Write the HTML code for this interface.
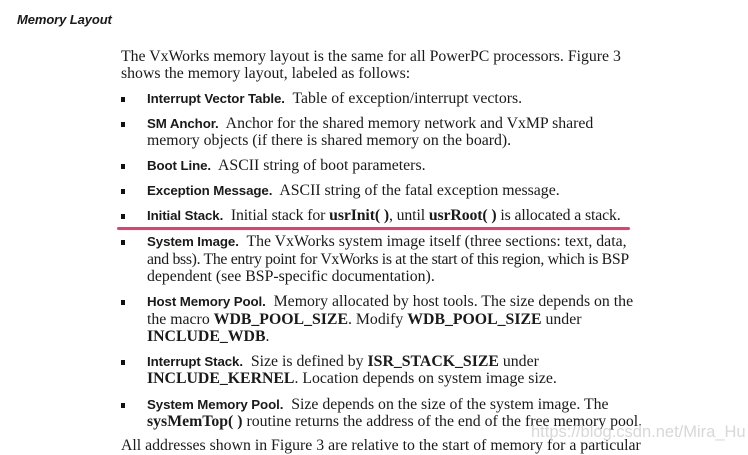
<!DOCTYPE html>
<html><head><meta charset="utf-8"><style>
body{margin:0;width:748px;height:452px;background:#fff;position:relative;overflow:hidden;color:#1a1a1a}
.l{position:absolute;white-space:nowrap;font-family:"Liberation Serif",serif;font-size:15.8px;line-height:18px}
.s{font-family:"Liberation Sans",sans-serif;font-weight:bold;font-size:13.3px;letter-spacing:-0.1px}
.b{position:absolute;left:121px;width:4px;height:5px;background:#111}
b{font-weight:bold}
</style></head><body>
<div class="l s" style="left:17px;top:11px;font-style:italic;font-size:13px">Memory Layout</div>
<div class="l" style="left:121px;top:48px">The VxWorks memory layout is the same for all PowerPC processors. Figure 3</div>
<div class="l" style="left:121px;top:65px">shows the memory layout, labeled as follows:</div>

<div class="b" style="top:97px"></div>
<div class="l" style="left:147px;top:90px"><span class="s">Interrupt Vector Table.</span>&nbsp; Table of exception/interrupt vectors.</div>

<div class="b" style="top:122px"></div>
<div class="l" style="left:147px;top:115px"><span class="s">SM Anchor.</span>&nbsp; Anchor for the shared memory network and VxMP shared</div>
<div class="l" style="left:147px;top:132px">memory objects (if there is shared memory on the board).</div>

<div class="b" style="top:164px"></div>
<div class="l" style="left:147px;top:157px"><span class="s">Boot Line.</span>&nbsp; ASCII string of boot parameters.</div>

<div class="b" style="top:189px"></div>
<div class="l" style="left:147px;top:182px"><span class="s">Exception Message.</span>&nbsp; ASCII string of the fatal exception message.</div>

<div class="b" style="top:214px"></div>
<div class="l" style="left:147px;top:207px;letter-spacing:-0.12px"><span class="s">Initial Stack.</span>&nbsp; Initial stack for <b>usrInit( )</b>, until <b>usrRoot( )</b> is allocated a stack.</div>
<div style="position:absolute;left:117px;top:227px;width:513px;height:3px;border-radius:2px;background:#ef3b6c"></div>

<div class="b" style="top:240px"></div>
<div class="l" style="left:147px;top:233px"><span class="s">System Image.</span>&nbsp; The VxWorks system image itself (three sections: text, data,</div>
<div class="l" style="left:147px;top:251px;letter-spacing:-0.33px">and bss). The entry point for VxWorks is at the start of this region, which is BSP</div>
<div class="l" style="left:147px;top:268px">dependent (see BSP-specific documentation).</div>

<div class="b" style="top:300px"></div>
<div class="l" style="left:147px;top:293px"><span class="s">Host Memory Pool.</span>&nbsp; Memory allocated by host tools. The size depends on the</div>
<div class="l" style="left:147px;top:311px">the macro <b>WDB_POOL_SIZE</b>. Modify <b>WDB_POOL_SIZE</b> under</div>
<div class="l" style="left:147px;top:328px"><b>INCLUDE_WDB</b>.</div>

<div class="b" style="top:360px"></div>
<div class="l" style="left:147px;top:353px"><span class="s">Interrupt Stack.</span>&nbsp; Size is defined by <b>ISR_STACK_SIZE</b> under</div>
<div class="l" style="left:147px;top:370px"><b>INCLUDE_KERNEL</b>. Location depends on system image size.</div>

<div class="b" style="top:403px"></div>
<div class="l" style="left:147px;top:396px"><span class="s">System Memory Pool.</span>&nbsp; Size depends on the size of the system image. The</div>
<div class="l" style="left:147px;top:413px"><b>sysMemTop( )</b> routine returns the address of the end of the free memory pool.</div>

<div class="l" style="left:121px;top:437px">All addresses shown in Figure 3 are relative to the start of memory for a particular</div>
<div class="l" style="left:531px;top:423px;font-family:'Liberation Sans',sans-serif;font-size:16.5px;color:#d8d8d8">https://blog.csdn.net/Mira_Hu</div>
</body></html>
